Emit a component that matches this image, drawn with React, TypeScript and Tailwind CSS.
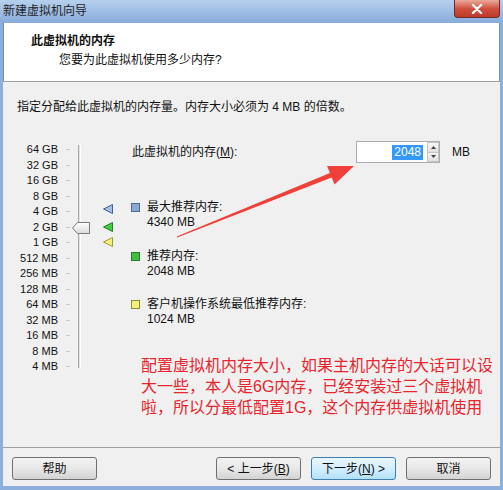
import React from 'react';

const sizes = ['64 GB', '32 GB', '16 GB', '8 GB', '4 GB', '2 GB', '1 GB', '512 MB', '256 MB', '128 MB', '64 MB', '32 MB', '16 MB', '8 MB', '4 MB'];

function Marker({ fill, stroke, className }: { fill: string; stroke: string; className: string }) {
  return (
    <svg width="10" height="10" viewBox="0 0 10 10" className={className}>
      <polygon points="0.5,5 9.5,0.5 9.5,9.5" fill={fill} stroke={stroke} strokeWidth="1" />
    </svg>
  );
}

function Legend({ square, border, title, value, className }: { square: string; border: string; title: string; value: string; className: string }) {
  return (
    <div className={`flex ${className}`}>
      <div className="w-[16px] pt-[3px]">
        <div className={`w-[9px] h-[9px] border ${square} ${border}`} />
      </div>
      <div className="leading-[15px]">
        <div>{title}</div>
        <div>{value}</div>
      </div>
    </div>
  );
}

function Button({ children, primary }: { children: React.ReactNode; primary?: boolean }) {
  return (
    <button
      className={`w-[85px] h-[23px] rounded-[3px] border text-[12px] leading-none flex items-center justify-center ${
        primary
          ? 'border-[#3c7fb1] bg-linear-to-b from-[#eaf6fd] via-[#d4eefc] to-[#b4e0f9]'
          : 'border-[#707070] bg-linear-to-b from-[#f2f2f2] via-[#e8e8e8] to-[#d3d3d3]'
      }`}
    >
      {children}
    </button>
  );
}

export default function App() {
  return (
    <div
      className="relative w-[503px] h-[490px] bg-[#8cafdc] flex flex-col text-[12px] text-[#111]"
      style={{ fontFamily: '"Liberation Sans", "Noto Sans CJK SC", sans-serif' }}
    >
      {/* title bar */}
      <div className="h-[23px] flex bg-linear-to-b from-[#b7cfee] to-[#88acdb]">
        <div className="pl-[3px] pt-[4px] leading-[14px] text-[#1e1e1e]">新建虚拟机向导</div>
        <div className="ml-auto mr-[3px] w-[46px] h-[18px] rounded-b-[4px] border border-t-0 border-[#6e2d26] bg-linear-to-b from-[#e9a99b] via-[#d0503f] to-[#c0392a] flex items-center justify-center">
          <svg width="12" height="10" viewBox="0 0 12 10">
            <path d="M2 1 L10 9 M10 1 L2 9" stroke="#fff" strokeWidth="2.4" strokeLinecap="round" />
          </svg>
        </div>
      </div>

      <div className="flex-1 flex flex-col px-[3px] pb-[4px]">
        {/* header */}
        <div className="h-[58px] bg-white border-l border-r border-[#6f8fbf]">
          <div className="pl-[27px] pt-[11px] leading-[14px] font-bold">此虚拟机的内存</div>
          <div className="pl-[55px] mt-[5px] leading-[14px]">您要为此虚拟机使用多少内存?</div>
        </div>
        <div className="h-px bg-[#a0a0a0]" />

        {/* body */}
        <div className="flex-1 bg-[#f0f0f0] flex flex-col">
          <div className="pl-[14px] pt-[18px] leading-[14px]">指定分配给此虚拟机的内存量。内存大小必须为 4 MB 的倍数。</div>

          <div className="flex mt-[27px]">
            <div className="w-[55px] pt-[1px] text-right text-[11px]">
              {sizes.map((s) => (
                <div key={s} className="h-[15.5px] leading-[15.5px]">{s}</div>
              ))}
            </div>
            <div className="w-[4px] ml-[8px] pt-[1px]">
              {sizes.map((s) => (
                <div key={s} className="h-[15.5px] flex items-center">
                  <div className="h-px w-full bg-[#cacaca]" />
                </div>
              ))}
            </div>
            <div className="relative ml-[8px] mt-[4px] w-[3px] h-[223px] border-l border-[#a8a8a8] border-r border-r-white bg-[#e2e2e2]">
              <svg width="19" height="12" viewBox="0 0 19 12" className="absolute left-[-7px] top-[77px]">
                <defs>
                  <linearGradient id="thumb" x1="0" y1="0" x2="0" y2="1">
                    <stop offset="0" stopColor="#ffffff" />
                    <stop offset="1" stopColor="#dcdcdc" />
                  </linearGradient>
                </defs>
                <path d="M0.5 6 L5.5 0.5 H17.5 V11.5 H5.5 Z" fill="url(#thumb)" stroke="#7a7a7a" strokeWidth="1" />
              </svg>
            </div>
            <div className="w-[10px] ml-[22px] flex flex-col">
              <Marker fill="#a3c0e2" stroke="#3d5f92" className="mt-[63px]" />
              <Marker fill="#45cc45" stroke="#2b7d2b" className="mt-[8px]" />
              <Marker fill="#f6f27c" stroke="#9b9a32" className="mt-[5px]" />
            </div>

            <div className="ml-[18px] flex-1 flex flex-col">
              <div className="h-[22px] flex items-center">
                <div className="w-[225px] pl-[1px]">
                  此虚拟机的内存(<span className="underline">M</span>):
                </div>
                <div className="w-[84px] h-[22px] border border-[#abadb3] bg-white flex">
                  <div className="flex-1 flex items-center justify-end pr-[4px]">
                    <span className="bg-[#3399ff] text-white leading-[15px] px-[2px]">2048</span>
                  </div>
                  <div className="w-[12px] flex flex-col">
                    <div className="flex-1 border border-[#c6c6c6] bg-linear-to-b from-[#f6f6f6] to-[#e0e0e0] flex items-center justify-center">
                      <svg width="5" height="3" viewBox="0 0 5 3"><path d="M0 3 L2.5 0 L5 3 Z" fill="#404040" /></svg>
                    </div>
                    <div className="flex-1 border border-t-0 border-[#c6c6c6] bg-linear-to-b from-[#f6f6f6] to-[#e0e0e0] flex items-center justify-center">
                      <svg width="5" height="3" viewBox="0 0 5 3"><path d="M0 0 L2.5 3 L5 0 Z" fill="#404040" /></svg>
                    </div>
                  </div>
                </div>
                <div className="ml-[12px]">MB</div>
              </div>

              <Legend square="bg-[#8ba9d0]" border="border-[#4b6a97]" title="最大推荐内存:" value="4340 MB" className="mt-[37px]" />
              <Legend square="bg-[#3fbf3f]" border="border-[#2a7a2a]" title="推荐内存:" value="2048 MB" className="mt-[19px]" />
              <Legend square="bg-[#f5f07c]" border="border-[#8c8c3a]" title="客户机操作系统最低推荐内存:" value="1024 MB" className="mt-[18px]" />

              <div className="ml-[10px] mt-[28px] text-[16px] leading-[21px] text-[#e8242c] whitespace-nowrap">
                <div>配置虚拟机内存大小，如果主机内存的大话可以设</div>
                <div>大一些，本人是6G内存，已经安装过三个虚拟机</div>
                <div>啦，所以分最低配置1G，这个内存供虚拟机使用</div>
              </div>
            </div>
          </div>

          <div className="mt-auto h-px bg-[#a0a0a0]" />
          <div className="h-[38px] pt-[9px] px-[9px] flex">
            <Button>帮助</Button>
            <div className="ml-auto flex gap-[10px]">
              <Button>&lt; 上一步(<span className="underline">B</span>)</Button>
              <Button primary>下一步(<span className="underline">N</span>) &gt;</Button>
              <Button>取消</Button>
            </div>
          </div>
        </div>
      </div>

      {/* annotation arrow */}
      <svg className="absolute left-0 top-0 pointer-events-none" width="503" height="490" viewBox="0 0 503 490">
        <polygon
          points="177.2,237.5 331.7,177.6 334.5,184.6 354,166 327.1,166 329.9,173 176.8,236.5"
          fill="#f0403a"
        />
      </svg>
    </div>
  );
}
